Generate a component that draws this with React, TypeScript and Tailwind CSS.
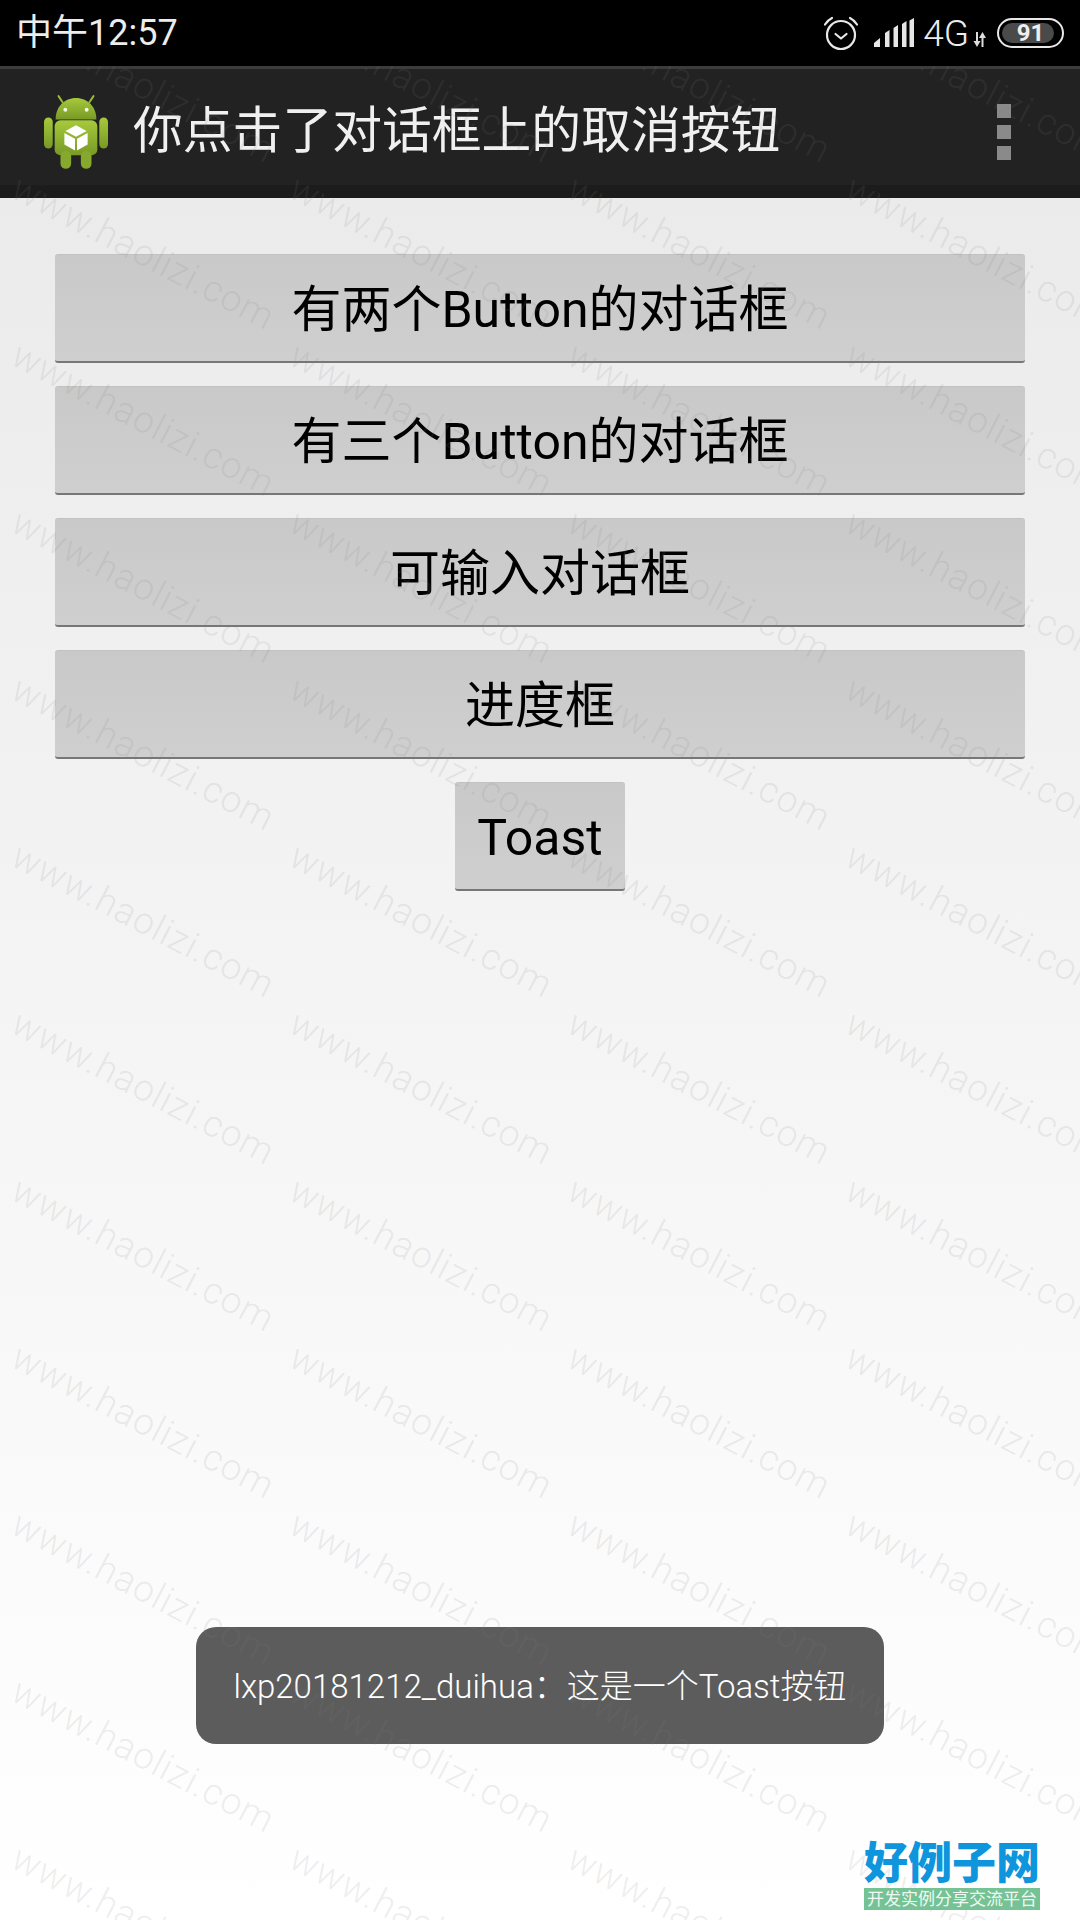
const cjk = 'font-["Roboto","Noto_Sans_CJK_SC",sans-serif]';

const buttons = ['有两个Button的对话框', '有三个Button的对话框', '可输入对话框', '进度框'];

function AppButton({ label, wide = true }: { label: string; wide?: boolean }) {
  return (
    <button
      className={`${wide ? 'w-full' : 'w-[170px] self-center'} h-[109px] shrink-0 rounded-[3px] bg-gradient-to-b from-[#c9c9c9] to-[#cfcfcf] border-t border-[#c2c2c2] border-b-[2px] border-b-[#777777] pt-[4px] text-[50px] leading-none text-black ${cjk}`}
    >
      {label}
    </button>
  );
}

function AlarmIcon() {
  return (
    <svg width="36" height="36" viewBox="0 0 36 36" fill="none" stroke="#e8e8e8" strokeWidth="2.2" strokeLinecap="round" strokeLinejoin="round">
      <circle cx="18" cy="20" r="14" />
      <path d="M12.5 19l5.5 4.500 5.500-4.500" />
      <path d="M2 9.500C4 6.500 6 4.500 9 3" />
      <path d="M34 9.500C32 6.500 30 4.500 27 3" />
    </svg>
  );
}

function SignalIcon() {
  return (
    <svg width="40" height="30" viewBox="0 0 40 30" fill="#e6e6e6">
      <path d="M0 29v-4l6-5v9z" />
      <path d="M11 29V15l4.500-3V29z" />
      <path d="M19.500 29V10l4.500-3V29z" />
      <path d="M28 29V6l4.500-3V29z" />
      <path d="M35.500 29V2.500L40 0v29z" />
    </svg>
  );
}

function DataArrows() {
  return (
    <svg width="13" height="15" viewBox="0 0 13 15" fill="#dcdcdc">
      <path d="M3 0h2v9h2.500L4 15 0.500 9H3z" />
      <path d="M8.500 15h2V6H13L9.500 0 6 6h2.500z" />
    </svg>
  );
}

function Battery() {
  return (
    <div className="relative w-[67px] h-[30px] rounded-full border-[2.500px] border-[#e8e8e8] p-[3px]">
      <div className="w-[52px] h-full rounded-full bg-[#4a4a4a]" />
      <span className={`absolute inset-0 flex items-center justify-center text-[24px] leading-none font-bold text-[#eeeeee] ${cjk}`}>91</span>
    </div>
  );
}

function AndroidIcon() {
  return (
    <svg width="64" height="76" viewBox="0 0 66 78" className="shrink-0">
      <defs>
        <linearGradient id="droid" x1="0" y1="0" x2="0" y2="1">
          <stop offset="0" stopColor="#a6c93b" />
          <stop offset="1" stopColor="#789a26" />
        </linearGradient>
      </defs>
      <path d="M19 8l-4-6M47 8l4-6" stroke="#9dbd35" strokeWidth="2" strokeLinecap="round" />
      <path d="M12 26C12 13 21 4 33 4s21 9 21 22z" fill="url(#droid)" />
      <circle cx="22" cy="16" r="2" fill="#f4f7e6" />
      <circle cx="44" cy="16" r="2" fill="#f4f7e6" />
      <rect x="11" y="27" width="44" height="36" rx="6" fill="url(#droid)" />
      <rect x="0" y="24" width="9" height="32" rx="4.500" fill="url(#droid)" />
      <rect x="57" y="24" width="9" height="32" rx="4.500" fill="url(#droid)" />
      <rect x="17" y="58" width="11" height="19" rx="5.500" fill="#86a82c" />
      <rect x="38" y="58" width="11" height="19" rx="5.500" fill="#86a82c" />
      <path d="M33 32l11 6-11 6-11-6z" fill="#ffffff" />
      <path d="M21 40l11 6v12l-11-6z" fill="#ffffff" />
      <path d="M45 40l-11 6v12l11-6z" fill="#ffffff" />
    </svg>
  );
}

function Watermarks() {
  const cells = Array.from({ length: 75 });
  return (
    <div className="absolute left-0 right-0 bottom-0 top-[66px] overflow-hidden pointer-events-none">
      <div className="absolute left-[23px] top-[-231px] grid grid-cols-[repeat(5,278px)] auto-rows-[167px]">
        {cells.map((_, i) => (
          <span
            key={i}
            className='block w-[278px] origin-top-left rotate-[27.500deg] text-[37px] leading-none font-light tracking-[1px] whitespace-nowrap text-[#808080]/15 font-["Roboto",sans-serif]'
          >
            www.haolizi.com
          </span>
        ))}
      </div>
    </div>
  );
}

export default function App() {
  return (
    <div className={`relative w-[1080px] h-[1920px] overflow-hidden flex flex-col bg-white ${cjk}`}>
      {/* Status bar */}
      <div className="h-[66px] shrink-0 bg-black flex items-center pl-[16px] pr-[16px]">
        <span className="text-[36px] leading-none text-[#ececec]">中午12:57</span>
        <div className="ml-auto flex items-center">
          <AlarmIcon />
          <div className="ml-[15px]"><SignalIcon /></div>
          <span className="ml-[9px] text-[37px] leading-none font-light text-[#ececec]">4G</span>
          <div className="ml-[4px] mt-[12px]"><DataArrows /></div>
          <div className="ml-[11px]"><Battery /></div>
        </div>
      </div>

      {/* Action bar */}
      <div className="h-[132px] shrink-0 bg-[#222222] border-t-[3px] border-[#3c3c3c] border-b-[13px] border-b-[#1c1c1c] pt-[10px] flex items-center pl-[44px] pr-[69px]">
        <AndroidIcon />
        <span className="ml-[25px] text-[49.800px] leading-none text-[#f0f0f0] whitespace-nowrap">你点击了对话框上的取消按钮</span>
        <div className="ml-auto flex flex-col gap-[7px]">
          <div className="w-[14px] h-[14px] bg-[#8a8a8a]" />
          <div className="w-[14px] h-[14px] bg-[#8a8a8a]" />
          <div className="w-[14px] h-[14px] bg-[#8a8a8a]" />
        </div>
      </div>

      {/* Buttons */}
      <div className="flex-1 bg-gradient-to-b from-[#ebebeb] to-[#ffffff] flex flex-col gap-[23px] px-[55px] pt-[56px]">
        {buttons.map((b) => (
          <AppButton key={b} label={b} />
        ))}
        <AppButton label="Toast" wide={false} />
      </div>

      {/* Toast */}
      <div className="absolute left-[196px] top-[1627px] w-[688px] h-[117px] rounded-[20px] bg-[#5c5c5c] flex items-center justify-center pt-[2px]">
        <span className="text-[33px] leading-none font-light text-white whitespace-nowrap">lxp20181212_duihua：这是一个Toast按钮</span>
      </div>

      <Watermarks />

      {/* Site logo */}
      <div className="absolute left-[864px] top-[1841px] w-[176px] flex flex-col items-center">
        <span className="text-[44px] leading-[46px] font-black text-[#0e95dc] whitespace-nowrap">好例子网</span>
        <span className="mt-[1px] w-full h-[22px] bg-[#75c295] text-[17px] leading-[22px] text-center text-[#f0f8f3] whitespace-nowrap">开发实例分享交流平台</span>
      </div>
    </div>
  );
}
